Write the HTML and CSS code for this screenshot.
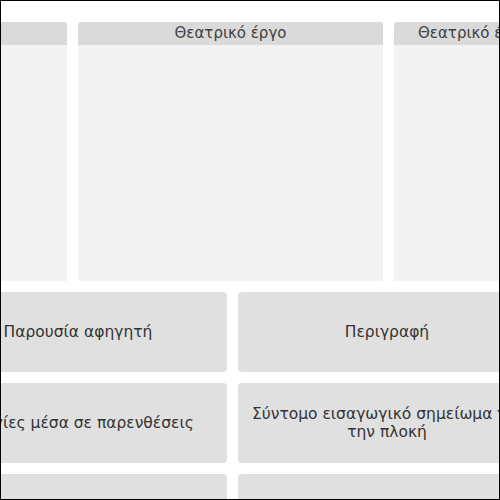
FILE: index.html
```html
<!DOCTYPE html>
<html lang="el">
<head>
<meta charset="utf-8">
<link rel="stylesheet" href="styles.css">
</head>
<body>
<div class="frame">
  <div class="columns">
    <div class="col"><div class="col-head">Θεατρικό έργο</div><div class="col-body"></div></div>
    <div class="col"><div class="col-head">Θεατρικό έργο</div><div class="col-body"></div></div>
    <div class="col col-narrow"><div class="col-head">Θεατρικό έργο</div><div class="col-body"></div></div>
  </div>
  <div class="cards">
    <div class="card">Παρουσία αφηγητή</div>
    <div class="card">Περιγραφή</div>
    <div class="card">Οδηγίες μέσα σε παρενθέσεις</div>
    <div class="card">Σύντομο εισαγωγικό σημείωμα για την πλοκή</div>
    <div class="card">Διάλογος</div>
    <div class="card">Αφήγηση</div>
  </div>
</div>
</body>
</html>
```

FILE: styles.css
```css
html, body {
  margin: 0;
  padding: 0;
  background: #ffffff;
}
.frame {
  box-sizing: border-box;
  width: 500px;
  height: 500px;
  border: 1px solid #000;
  overflow: hidden;
  background: #fff;
  font-family: "DejaVu Sans", "Liberation Sans", sans-serif;
}
.columns {
  display: flex;
  gap: 11px;
  margin-top: 21px;
  margin-left: -239px;
}
.col {
  flex: 0 0 305px;
  width: 305px;
  display: flex;
  flex-direction: column;
}
.col-narrow {
  flex: 0 0 160px;
  width: 160px;
}
.col-head {
  height: 23px;
  background: #dadada;
  color: #3f3f3f;
  font-size: 15px;
  line-height: 23px;
  text-align: center;
  white-space: nowrap;
  border-radius: 3px 3px 0 0;
}
.col-body {
  height: 236px;
  background: #f3f3f3;
}
.cards {
  display: grid;
  grid-template-columns: 298px 298px;
  gap: 11px;
  margin-top: 11px;
  margin-left: -72px;
}
.card {
  height: 80px;
  background: #e0e0e0;
  border-radius: 4px;
  color: #333;
  font-size: 15.5px;
  line-height: 18.5px;
  display: flex;
  align-items: center;
  justify-content: center;
  text-align: center;
  padding: 0 9px;
  box-sizing: border-box;
}
```
